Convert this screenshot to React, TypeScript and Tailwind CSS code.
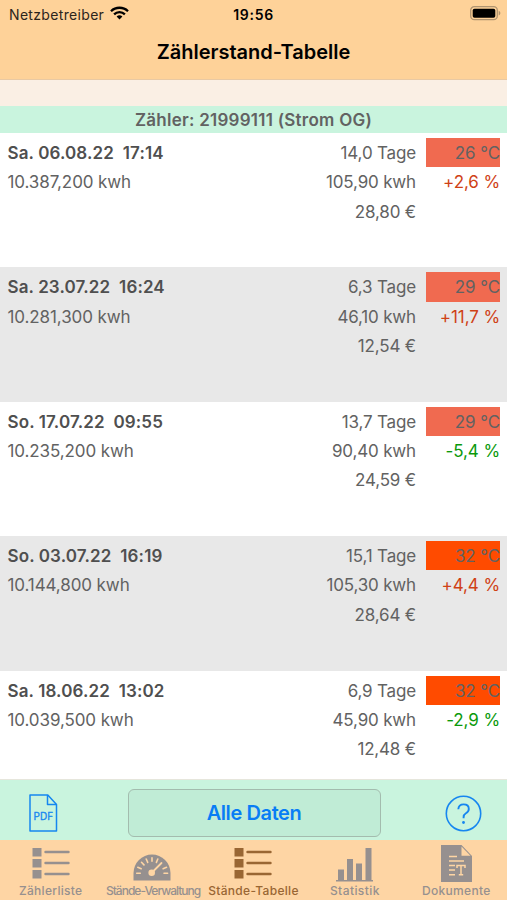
import clsx from 'clsx';

type Reading = {
  date: string;
  time: string;
  meter: string;
  days: string;
  usage: string;
  cost: string;
  temp: string;
  hot: boolean;
  change: string;
};

const readings: Reading[] = [
  { date: 'Sa. 06.08.22', time: '17:14', meter: '10.387,200 kwh', days: '14,0 Tage', usage: '105,90 kwh', cost: '28,80 €', temp: '26 °C', hot: false, change: '+2,6 %' },
  { date: 'Sa. 23.07.22', time: '16:24', meter: '10.281,300 kwh', days: '6,3 Tage', usage: '46,10 kwh', cost: '12,54 €', temp: '29 °C', hot: false, change: '+11,7 %' },
  { date: 'So. 17.07.22', time: '09:55', meter: '10.235,200 kwh', days: '13,7 Tage', usage: '90,40 kwh', cost: '24,59 €', temp: '29 °C', hot: false, change: '-5,4 %' },
  { date: 'So. 03.07.22', time: '16:19', meter: '10.144,800 kwh', days: '15,1 Tage', usage: '105,30 kwh', cost: '28,64 €', temp: '32 °C', hot: true, change: '+4,4 %' },
  { date: 'Sa. 18.06.22', time: '13:02', meter: '10.039,500 kwh', days: '6,9 Tage', usage: '45,90 kwh', cost: '12,48 €', temp: '32 °C', hot: true, change: '-2,9 %' },
];

const WifiIcon = () => (
  <svg width="19" height="14" viewBox="0 0 19 14" fill="none" stroke="#000" strokeWidth="2.3">
    <path d="M1 5.2a12.2 12.2 0 0 1 17 0" />
    <path d="M4.1 8.4a7.7 7.7 0 0 1 10.8 0" />
    <path d="M9.5 13.5 6.6 10.6a4.2 4.2 0 0 1 5.8 0z" fill="#000" stroke="none" />
  </svg>
);

const BatteryIcon = () => (
  <svg width="31" height="15" viewBox="0 0 31 15">
    <rect x="0.7" y="0.7" width="26.6" height="13" rx="3.6" fill="none" stroke="#b09470" strokeWidth="1.3" />
    <rect x="2.7" y="2.7" width="22.6" height="9" rx="1.8" fill="#000" />
    <path d="M28.7 4.8c2.2.9 2.2 3.9 0 4.8z" fill="#b09470" />
  </svg>
);

const PdfIcon = () => (
  <svg width="29" height="38" viewBox="0 0 29 38" fill="none" stroke="#1686f0" strokeWidth="1.5" strokeLinejoin="round">
    <path d="M1 1h17.8l8.7 9.5V37H1z" />
    <path d="M18.5 1v9.5h9" />
    <text x="14.3" y="25.6" textAnchor="middle" fontSize="9.7" fill="#1686f0" strokeWidth="0.3" textLength="19.5" lengthAdjust="spacingAndGlyphs">
      PDF
    </text>
  </svg>
);

const HelpIcon = () => (
  <svg width="37" height="37" viewBox="0 0 37 37" fill="none" stroke="#1686f0" strokeWidth="1.6">
    <circle cx="18.5" cy="18.5" r="17.2" />
    <path d="M13.3 14.2c.2-3 2.2-4.8 5.3-4.8 3.1 0 5.2 1.8 5.2 4.5 0 2.2-1.2 3.3-2.9 4.4-1.8 1.1-2.3 2-2.3 4v1" strokeWidth="1.9" />
    <circle cx="18.5" cy="27.5" r="1.4" fill="#1686f0" stroke="none" />
  </svg>
);

const ListIcon = () => (
  <svg width="38" height="32" viewBox="0 0 38 32" fill="currentColor">
    <path d="M0.5 0h9v8.5h-9zM0.5 11h9v8.500h-9zM0.500 22h9v8.500h-9z" />
    <path d="M13.500 4h23M13.500 15h23M13.500 26h23" stroke="currentColor" strokeWidth="2.4" strokeLinecap="round" />
  </svg>
);

const GaugeIcon = () => (
  <svg width="38" height="27" viewBox="0 0 38 27">
    <path d="M.5 26.500V19a18.500 18.500 0 0 1 37 0v7.500z" fill="currentColor" />
    <g stroke="#fed5a4" strokeWidth="1.6" strokeLinecap="round">
      <path d="M3.700 19.300h3.600M31 19.300h3.600M4.800 13.300l3.400 1.400M33.500 13.300l-3.400 1.400M8.500 8.300l2.500 2.600M13.200 5l1.500 3.400M19 3.700v3.600M24.800 5l-1.400 3.400" />
      <path d="M19 18.500 28.500 9" strokeWidth="1.8" />
    </g>
    <circle cx="18.700" cy="18.800" r="3.300" fill="#fed5a4" />
  </svg>
);

const ChartIcon = () => (
  <svg width="37" height="34" viewBox="0 0 37 34" fill="currentColor">
    <path d="M0 32h37v1.500H0zM2 21.500h6V32H2zM11 11h6v21h-6zM20 15.500h6V32h-6zM29.500 0h6v32h-6z" />
  </svg>
);

const DocumentIcon = () => (
  <svg width="31" height="37" viewBox="0 0 31 37">
    <path d="M0 0h20.500L31 11v26H0z" fill="currentColor" />
    <path d="M20.500 1.500v9.300h9z" fill="#fed5a4" />
    <path d="M8 11.500h8M8 16h15M8 20.500h6M8 25h6M8 29.700h6" stroke="#fed5a4" strokeWidth="1.5" />
    <path d="M16 23v-2.500h8V23M20 20.500v9.200M17.800 29.700h4.400" stroke="#fed5a4" strokeWidth="1.5" fill="none" />
  </svg>
);

const tabs = [
  { label: 'Zählerliste', icon: <ListIcon />, text: 'tracking-[0.3px]', pad: 'pt-[8px]' },
  { label: 'Stände-Verwaltung', icon: <GaugeIcon />, text: 'pl-[2px] tracking-[-0.97px]', pad: 'pt-[14px]' },
  { label: 'Stände-Tabelle', icon: <ListIcon />, text: 'tracking-[0.3px]', pad: 'pt-[8px]', active: true },
  { label: 'Statistik', icon: <ChartIcon />, text: 'tracking-[0.43px]', pad: 'pt-[8px]' },
  { label: 'Dokumente', icon: <DocumentIcon />, text: 'tracking-[0.3px]', pad: 'pt-[5px]' },
];

const ReadingRow = ({ reading }: { reading: Reading }) => (
  <div className="flex h-[134.4px] shrink-0 px-[7px] pt-[5px] text-[17px] leading-[29.3px] whitespace-pre odd:bg-white even:bg-[#e8e8e8]">
    <div className="flex-1 pt-px pl-[0.5px]">
      <div className="font-semibold tracking-[0.12px] text-[#4f4f4f]">{reading.date}{'  '}{reading.time}</div>
      <div className="tracking-[-0.1px]">{reading.meter}</div>
    </div>
    <div className="pt-px text-right tracking-[-0.17px]">
      <div>{reading.days}</div>
      <div>{reading.usage}</div>
      <div>{reading.cost}</div>
    </div>
    <div className="ml-[10px] w-[74px] text-right tracking-[-0.1px]">
      <div className={clsx('h-[29.3px] pt-px', reading.hot ? 'bg-[#ff4b00]' : 'bg-[#f06a50]')}>{reading.temp}</div>
      <div className={clsx('pt-px', reading.change.startsWith('+') ? 'text-[#cf4115]' : 'text-[#0b990b]')}>{reading.change}</div>
    </div>
  </div>
);

const App = () => {
  return (
    <div className="flex h-[900px] w-[507px] flex-col overflow-hidden bg-white font-['Inter',sans-serif] text-[#626262]">
      <header className="h-20 shrink-0 border-b border-[#e9c9a3] bg-[#fed299] text-black">
        <div className="flex h-7 items-center pr-[6px] pl-[9px] text-[14px]">
          <div className="flex flex-1 items-center gap-[6px] pb-[2px] text-[#2b241b]">
            <span className="pt-[2px] tracking-[0.33px]">Netzbetreiber</span>
            <WifiIcon />
          </div>
          <div className="pr-[3px] text-center font-semibold tracking-[0.7px]">19:56</div>
          <div className="flex flex-1 justify-end pb-[2px]">
            <BatteryIcon />
          </div>
        </div>
        <h1 className="pt-[9px] text-center text-[20px] leading-[30px] font-semibold">Zählerstand-Tabelle</h1>
      </header>

      <div className="h-[26px] shrink-0 bg-[#faefe4]" />
      <div className="h-[27px] shrink-0 bg-[#c9f4de] text-center text-[17px] leading-[28px] font-semibold tracking-[0.25px]">
        Zähler: 21999111 (Strom OG)
      </div>

      <main className="flex min-h-0 flex-1 flex-col overflow-hidden">
        {readings.map((reading) => (
          <ReadingRow key={reading.date} reading={reading} />
        ))}
      </main>

      <div className="flex h-[61px] shrink-0 items-center justify-between border-t border-[#e6e6dc] bg-[#c9f4de] pr-[25px] pl-[29px]">
        <button className="w-[34px] pt-[5px]">
          <PdfIcon />
        </button>
        <button className="mt-[6px] h-12 w-[253px] rounded-[6px] border border-[#a3bcae] bg-[#c0ecd6] text-[20px] font-semibold tracking-[-0.4px] text-[#087df5]">
          Alle Daten
        </button>
        <button className="pt-[6px]">
          <HelpIcon />
        </button>
      </div>

      <nav className="grid h-[60px] shrink-0 grid-cols-5 bg-[#fed5a4]">
        {tabs.map((tab) => (
          <div key={tab.label} className={clsx('flex flex-col items-center', tab.active ? 'text-[#996633]' : 'text-[#96908f]')}>
            <div className={clsx('h-[43px]', tab.pad)}>{tab.icon}</div>
            <span className={clsx('text-[12px] leading-[16px] font-medium whitespace-nowrap', tab.text)}>{tab.label}</span>
          </div>
        ))}
      </nav>
    </div>
  );
};

export default App;
